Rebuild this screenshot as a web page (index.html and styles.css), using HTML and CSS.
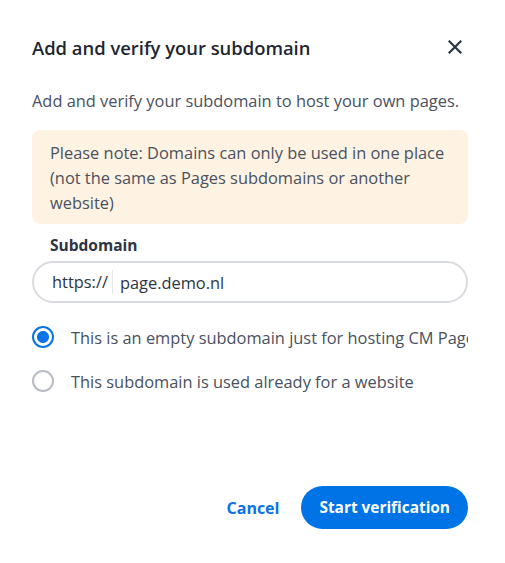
FILE: index.html
```html
<!DOCTYPE html>
<html>
<head>
<meta charset="utf-8">
<link rel="stylesheet" href="styles.css">
</head>
<body>
<div class="dialog">
  <div class="header">
    <h1 class="title">Add and verify your subdomain</h1>
    <button class="close" aria-label="Close">
      <svg width="14" height="14" viewBox="0 0 14 14"><path d="M1.5 1.5 L12.5 12.5 M12.5 1.5 L1.5 12.5" stroke="#2b3445" stroke-width="2.2" stroke-linecap="square"/></svg>
    </button>
  </div>
  <p class="desc">Add and verify your subdomain to host your own pages.</p>
  <div class="note">Please note: Domains can only be used in one place (not the same as Pages subdomains or another website)</div>
  <label class="label">Subdomain</label>
  <div class="input">
    <span class="prefix">https://</span>
    <span class="value">page.demo.nl</span>
  </div>
  <div class="radios">
    <div class="radio-row"><span class="radio checked"></span><span class="radio-text">This is an empty subdomain just for hosting CM Pages</span></div>
    <div class="radio-row"><span class="radio"></span><span class="radio-text">This subdomain is used already for a website</span></div>
  </div>
  <div class="footer">
    <button class="cancel">Cancel</button>
    <button class="primary">Start verification</button>
  </div>
</div>
</body>
</html>
```
FILE: styles.css
```css
* { box-sizing: border-box; }
html, body { margin: 0; padding: 0; background: #fff; }
body { font-family: "Open Sans", "Noto Sans", sans-serif; color: #4a5160; }
.dialog { width: 505px; padding: 0 37px 0 32px; display: flex; flex-direction: column; }
.header { display: flex; align-items: center; justify-content: space-between; height: 24px; margin-top: 35px; }
.title { margin: 0; font-size: 18.4px; font-weight: 600; color: #1f2633; }
.close { background: none; border: 0; padding: 0; width: 14px; height: 14px; margin-right: 6px; display: flex; }
.desc { margin: 32px 0 0; font-size: 16.4px; line-height: 20px; color: #4a5160; }
.note { margin-top: 19px; background: #fef3e2; border-radius: 8px; padding: 10px 18px 9px; font-size: 16.4px; line-height: 25px; color: #4a5160; }
.label { margin: 11px 0 0 18px; font-size: 15.5px; font-weight: 700; color: #2d3443; line-height: 20px; }
.input { margin-top: 6px; height: 42px; border: 2px solid #d8dbe0; border-radius: 21px; display: flex; align-items: center; padding-left: 18px; font-size: 16.4px; color: #2d3443; }
.prefix { padding-right: 4px; border-right: 1px solid #e6e8ec; line-height: 24px; }
.value { padding-left: 7px; }
.radios { margin-top: 23px; display: flex; flex-direction: column; gap: 22px; }
.radio-row { display: flex; align-items: center; gap: 17px; height: 22px; overflow: hidden; white-space: nowrap; }
.radio { flex: none; width: 22px; height: 22px; border-radius: 50%; border: 2px solid #b8bcc4; }
.radio.checked { border-color: #0a73e6; background: radial-gradient(circle, #0a73e6 0 5.5px, #fff 6.5px); border-width: 2.5px; }
.radio-text { font-size: 16.4px; color: #4a5160; }
.footer { margin-top: 94px; display: flex; justify-content: flex-end; align-items: center; gap: 22px; }
.cancel { background: none; border: 0; font-family: inherit; font-size: 16px; font-weight: 700; color: #0a73e6; padding: 0; }
.primary { background: #0073e6; color: #fff; border: 0; border-radius: 22px; height: 43px; padding: 0 18px; font-family: inherit; font-size: 15.4px; font-weight: 700; }
```
